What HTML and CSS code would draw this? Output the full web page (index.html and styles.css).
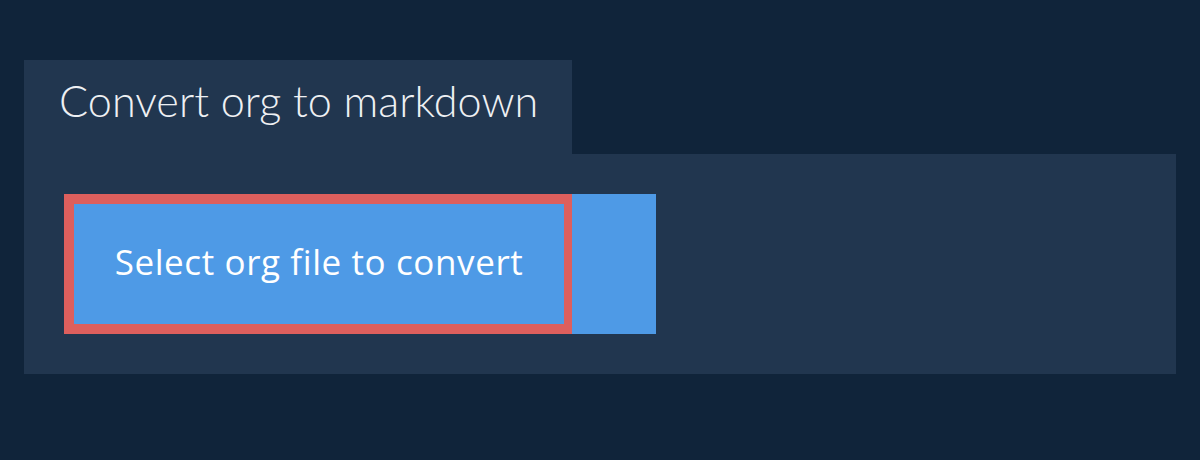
FILE: index.html
```html
<!DOCTYPE html>
<html>
<head>
<meta charset="utf-8">
<link rel="stylesheet" href="styles.css">
</head>
<body>
<div class="page">
  <div class="tab"><h1 class="title">Convert org to markdown</h1></div>
  <div class="panel">
    <div class="button">
      <div class="select">Select org file to convert</div>
    </div>
  </div>
</div>
</body>
</html>
```
FILE: styles.css
```css
html, body {
  margin: 0;
  padding: 0;
  background: #10243a;
  width: 1200px;
  height: 460px;
  overflow: hidden;
}
.page {
  padding: 60px 24px 0 24px;
  font-family: Lato, "Noto Sans", sans-serif;
}
.tab {
  width: 548px;
  height: 94px;
  background: #21364f;
  box-sizing: border-box;
  padding-left: 35px;
}
.title {
  margin: 0;
  font-weight: 300;
  font-size: 43.2px;
  line-height: 81px;
  color: #eef0f3;
  white-space: nowrap;
}
.panel {
  background: #21364f;
  height: 220px;
  box-sizing: border-box;
  padding: 40px;
}
.button {
  width: 592px;
  height: 140px;
  background: #4e9ae6;
  display: flex;
}
.select {
  width: 508px;
  height: 140px;
  box-sizing: border-box;
  border: 10px solid #dd5f5d;
  border-right-width: 8px;
  color: #ffffff;
  font-family: "Open Sans", Lato, sans-serif;
  font-size: 35px;
  letter-spacing: 0.6px;
  display: flex;
  align-items: center;
  justify-content: center;
  padding-bottom: 6px;
  white-space: nowrap;
}
```
